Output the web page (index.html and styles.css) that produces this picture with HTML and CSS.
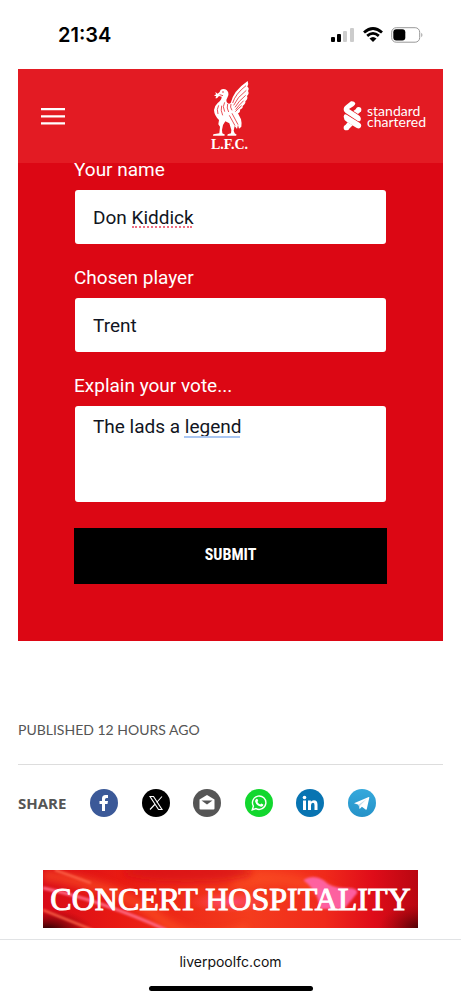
FILE: index.html
```html
<!DOCTYPE html>
<html lang="en">
<head>
<meta charset="utf-8">
<meta name="viewport" content="width=device-width, initial-scale=1">
<title>Liverpool FC</title>
<link rel="stylesheet" href="styles.css">
</head>
<body>
<div class="status">
  <span class="clock">21:34</span>
  <div class="indicators">
    <svg width="24" height="16" viewBox="0 0 24 16" aria-hidden="true"><rect y="10" width="4" height="5" rx="1"/><rect x="6" y="7" width="4" height="8" rx="1"/><g fill="#ccc"><rect x="12" y="4" width="4" height="11" rx="1"/><rect x="19" y="1" width="4" height="14" rx="1"/></g></svg>
    <svg width="20" height="16" viewBox="0 0 20 16" aria-hidden="true"><path d="M1 5.500Q10-2.500 19 5.500M4.200 8.900Q10 3.800 15.800 8.900" fill="none" stroke="#000" stroke-width="2.800"/><path d="M6.500 11.500Q10 8.300 13.500 11.500L10 15z"/></svg>
    <svg width="32" height="16" viewBox="0 0 32 16" aria-hidden="true"><rect x=".7" y=".7" width="28" height="14.500" rx="4.500" fill="none" stroke="#999"/><rect x="2.300" y="2.300" width="12" height="11.300" rx="3"/><path d="M30.300 5.700q2.200 2.200 0 4.500z" fill="#999"/></svg>
  </div>
</div>
<main class="page">
  <section class="card">
    <header class="site-header">
      <button class="menu" aria-label="Menu"><svg width="24" height="18" viewBox="0 0 24 18" fill="#fff"><path d="M0 1h24v2.300H0zM0 8.300h24v2.300H0zM0 15.300h24v2.300H0z"/></svg></button>
      <a class="crest" href="#" aria-label="Liverpool FC home">
        <svg width="42" height="57" viewBox="60 30 126 171" fill="#fff" aria-hidden="true">
          <path d="M92 66Q94 57 103 57 115 58 118 68 120 76 115 83 110 90 113 96 118 104 125 99 129 82 140 66 154 48 176 33 180 42 175 50 182 54 177 63 182 70 174 78 178 86 169 94 171 101 161 108 163 114 153 119 155 126 147 130L156 148Q159 160 157 170L150 176 147 165 144 177 137 168 134 182 137 190 143 194 141 197 115 197 116 193 126 190 127 180 121 160 109 154 102 165 99 180 100 190 108 194 106 197 72 197 73 193 91 190 93 170 88 163 90 150Q76 137 75 120 76 108 86 99 98 90 98 80L90 78 84 85 79 85 82 79 75 77 81 73 79 66 86 71z"/>
          <g fill="none" stroke="#e31b23" stroke-width="2.300"><path d="M131 99Q139 72 171 47M134 106Q144 82 172 61M138 112Q148 94 170 76M140 119Q150 105 164 92M139 125Q148 115 158 107M126 102Q122 111 129 121M116 102Q112 114 119 126M129 130L147 164M121 136L138 167M107 97Q99 109 107 125M89 106Q82 118 87 132M98 107Q94 121 101 136"/><path d="M92 74L102 77"/></g>
          <circle cx="102" cy="66" r="2.300" fill="#e31b23"/>
        </svg>
        <span class="crest-name">L.F.C.</span>
      </a>
      <a class="sponsor" href="#">
        <svg width="20" height="30" viewBox="37 35 60 90" fill="#fff" aria-hidden="true"><path d="M61 36Q71 35 74 42 74 47 68 51L55 59 84 78Q94 86 89 94 85 98 77 92L45 71Q38 66 39 59 39 53 46 48z"/><circle cx="84" cy="61" r="8"/><path d="M48 76L84 99Q94 105 91 112 87 121 77 115L48 97Q39 91 39 82 40 72 48 76z"/><circle cx="47" cy="115" r="8"/><path d="M40 112L51 99 66 108 52 122zM68 65L83 54 91 66 82 74z"/></svg>
        <span>standard<br>chartered</span>
      </a>
    </header>
    <form class="vote">
      <div class="field">
        <label for="name">Your name</label>
        <div class="control"><input id="name" type="text" value="Don Kiddick" spellcheck="false"><i class="spelling"></i></div>
      </div>
      <div class="field">
        <label for="player">Chosen player</label>
        <div class="control"><input id="player" type="text" value="Trent" spellcheck="false"></div>
      </div>
      <div class="field">
        <label for="reason">Explain your vote...</label>
        <div class="control"><textarea id="reason" spellcheck="false">The lads a legend</textarea><i class="grammar"></i></div>
      </div>
      <button class="submit" type="button">SUBMIT</button>
    </form>
  </section>
  <p class="published">PUBLISHED 12 HOURS AGO</p>
  <div class="share">
    <span class="share-label">SHARE</span>
    <a href="#" aria-label="Facebook"><svg viewBox="0 0 28 28"><circle cx="14" cy="14" r="14" fill="#3b5998"/><path d="M12 22v-7H9.500v-3H12V9.500Q12 6 15.500 6H18v3h-1.500Q15 9 15 10.500V12h3l-.5 3H15v7z" fill="#fff"/></svg></a>
    <a href="#" aria-label="X"><svg viewBox="0 0 28 28"><circle cx="14" cy="14" r="14"/><path d="M8 7.500h3.500l8.500 13h-3.500zM20 7.500l-5.400 6M13.200 15L8 20.500" fill="none" stroke="#fff" stroke-width="1.100"/></svg></a>
    <a href="#" aria-label="Email"><svg viewBox="0 0 28 28"><circle cx="14" cy="14" r="14" fill="#555"/><path d="M6.500 10.500L14 6l7.500 4.500v9q0 1-1 1h-13q-1 0-1-1z" fill="#fff"/><path d="M8.500 11.500h11L14 15.500z" fill="#555"/></svg></a>
    <a href="#" aria-label="WhatsApp"><svg viewBox="0 0 28 28"><circle cx="14" cy="14" r="14" fill="#12d72e"/><path d="M7.300 20.800l1.100-3.700a6.700 6.700 0 1 1 2.600 2.500z" fill="none" stroke="#fff" stroke-width="1.400"/><path d="M11 10.200q1-.9 1.600.1l.6 1.500-.8 1.200q1 1.800 2.800 2.600l1.100-1.200 2 1q.2 1.500-1.200 2.100-1.500.6-4.100-1-2.500-1.800-2.900-3.900-.1-1.500.9-2.400z" fill="#fff"/></svg></a>
    <a href="#" aria-label="LinkedIn"><svg viewBox="0 0 28 28"><circle cx="14" cy="14" r="14" fill="#0874b2"/><g fill="#fff"><circle cx="8.500" cy="8.500" r="1.800"/><path d="M7 11.500h3V21H7zM12 11.500h2.800v1.300q1-1.600 3.100-1.600 3.600 0 3.600 4.300V21h-3v-5q0-2.300-1.600-2.300-1.900 0-1.900 2.500V21h-3z"/></g></svg></a>
    <a href="#" aria-label="Telegram"><svg viewBox="0 0 28 28"><defs><linearGradient id="tg" x2="0" y2="1"><stop stop-color="#35a9dc"/><stop offset="1" stop-color="#2592c8"/></linearGradient></defs><circle cx="14" cy="14" r="14" fill="url(#tg)"/><path d="M6 14.200L20.700 8q.8-.2.6.8l-2.500 11.300q-.3.900-1.200.3l-3.700-2.700-2.200 2.200-1.200-4.200z" fill="#fff"/><path d="M10.500 15.700L18.700 10l-6.500 6.500-.5 3.400z" fill="#c3ddec"/></svg></a>
  </div>
  <a class="banner" href="#">
    <svg class="banner-art" viewBox="0 0 376 58" preserveAspectRatio="none" aria-hidden="true">
      <defs>
        <linearGradient id="bg"><stop stop-color="#d80a18"/><stop offset=".2" stop-color="#e81a13"/><stop offset=".55" stop-color="#f43c1d"/><stop offset=".75" stop-color="#f02a1b"/><stop offset=".88" stop-color="#df0c19"/><stop offset="1" stop-color="#b90711"/></linearGradient>
        <radialGradient id="dark"><stop stop-color="#160000"/><stop offset="1" stop-color="#810008" stop-opacity="0"/></radialGradient>
        <radialGradient id="glow"><stop stop-color="#ff4b82" stop-opacity=".9"/><stop offset="1" stop-color="#ff4b52" stop-opacity="0"/></radialGradient>
        <filter id="soft" x="-20%" y="-20%" width="140%" height="140%"><feGaussianBlur stdDeviation="1"/></filter>
        <filter id="haze" x="-20%" y="-50%" width="140%" height="200%"><feGaussianBlur stdDeviation="4"/></filter>
      </defs>
      <path fill="url(#bg)" d="M0 0h376v58H0z"/>
      <path d="M0 5Q75 15 116 48T205 60" fill="none" stroke="#ff5a25" stroke-width="11" opacity=".6" filter="url(#haze)"/>
      <path d="M190 12Q250 0 300 30" fill="none" stroke="#ff5a25" stroke-width="11" opacity=".5" filter="url(#haze)"/>
      <ellipse cx="145" cy="2" rx="65" ry="10" fill="#d50816" opacity=".7" filter="url(#haze)"/>
      <ellipse cx="4" cy="61" rx="47" ry="22" fill="url(#dark)"/>
      <ellipse cx="378" cy="58" rx="42" ry="24" fill="url(#dark)" opacity=".7"/>
      <ellipse cx="187" cy="32" rx="42" ry="11" fill="url(#glow)"/>
      <g fill="none" filter="url(#soft)"><path d="M0 18Q57 30 124 60" stroke="#ff6782" stroke-width="3"/><path d="M0 40L50 60M12 0L48 13" stroke="#ff684b" stroke-width="2"/></g>
      <path d="M261 10Q271 4 281 10 290 19 305 18 316 18 315 23L302 39H277Q278 24 261 10z" fill="#ff66ae" opacity=".9" filter="url(#soft)"/>
    </svg>
    <span>CONCERT HOSPITALITY</span>
  </a>
</main>
<footer class="browser-bar"><span>liverpoolfc.com</span><div class="home"></div></footer>
</body>
</html>
```

FILE: styles.css
```css
* { box-sizing: border-box; }
body { margin: 0; min-height: 100vh; display: flex; flex-direction: column; background: #fff; font-family: Roboto, sans-serif; }
a { color: inherit; text-decoration: none; }
button { border: 0; padding: 0; cursor: pointer; }
svg { display: block; }

.status { height: 69px; padding: 0 38px 0 58px; display: flex; align-items: center; justify-content: space-between; }
.clock { font: 600 20px/24px Inter, sans-serif; }
.indicators { display: flex; align-items: center; gap: 8px; }

.page { flex: 1; padding: 0 18px; }
.card { background: #dc0714; }
.site-header { height: 94px; padding: 0 17px; display: grid; grid-template-columns: 1fr auto 1fr; align-items: center; background: #e31b23; color: #fff; }
.menu { justify-self: start; margin-left: 6px; background: none; }
.crest { display: flex; flex-direction: column; align-items: center; margin-right: 2px; }
.crest-name { font: bold 14px/16px "Liberation Serif", serif; }
.sponsor { justify-self: end; display: flex; align-items: center; gap: 4px; font: 14px/11px Lato, sans-serif; }

.vote { padding: 0 56px 57px; }
.field { margin-bottom: 27px; }
.field:last-of-type { margin-bottom: 26px; }
.field label { display: block; margin-bottom: 13px; color: #fff; font-size: 19px; line-height: 14px; }
.control { position: relative; display: flex; margin: 0 1px; }
.control input, .control textarea { width: 100%; height: 54px; margin: 0; padding: 0 18px; border: 0; border-radius: 3px; outline: 0; background: #fff; color: #111522; font: 19px/22px Roboto, sans-serif; }
.control textarea { height: 96px; padding: 10px 18px; resize: none; }
.spelling { position: absolute; left: 57px; top: 36px; width: 60px; border-top: 2px dotted #ef6d82; }
.grammar { position: absolute; left: 109px; top: 30px; width: 56px; height: 2px; background: #a9c6f2; }
.submit { display: block; width: 100%; height: 56px; padding-bottom: 3px; background: #000; color: #fff; font: 700 16px/20px "Roboto Condensed", Roboto, sans-serif; }

.published { margin: 79px 0 0; padding-bottom: 24px; border-bottom: 1px solid #ddd; color: #555; font: 14px/20px Lato, sans-serif; }
.share { display: flex; align-items: center; justify-content: space-between; max-width: 358px; padding-top: 24px; }
.share-label { color: #555; font: 700 15px/20px "Open Sans", sans-serif; }
.share a, .share svg { width: 28px; height: 28px; }
.banner { position: relative; display: grid; place-items: center; height: 58px; margin: 53px 25px 11px; overflow: hidden; color: #fff; font: 32px/40px "Liberation Serif", serif; -webkit-text-stroke: 1px #fff; white-space: nowrap; }
.banner-art { position: absolute; inset: 0; width: 100%; height: 100%; }
.banner span { position: relative; }

.browser-bar { border-top: 1px solid #e1e3e5; padding: 12px 0 10px; text-align: center; color: #111; font: 14px/20px Inter, sans-serif; }
.home { width: 164px; height: 5px; margin: 14px auto 0; border-radius: 3px; background: #000; }
```
